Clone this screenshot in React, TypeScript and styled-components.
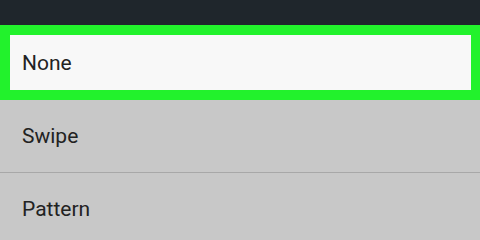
import React from "react";
import styled, { createGlobalStyle } from "styled-components";

const Global = createGlobalStyle`
  html, body { margin: 0; padding: 0; background: #c8c8c8; }
  body { width: 480px; height: 240px; overflow: hidden; font-family: Roboto, "Liberation Sans", sans-serif; }
`;

const Screen = styled.div`
  width: 480px;
  height: 240px;
  display: flex;
  flex-direction: column;
  overflow: hidden;
  background: #c8c8c8;
`;

const Header = styled.div`
  height: 25px;
  flex: none;
  background: #1f262c;
`;

const Highlight = styled.div`
  flex: none;
  background: #22f22c;
  padding: 10px 9px 10px 10px;
`;

const Option = styled.div<{ $selected?: boolean }>`
  display: flex;
  align-items: center;
  padding-left: ${(p) => (p.$selected ? "12px" : "22px")};
  height: ${(p) => (p.$selected ? "55px" : "72px")};
  background: ${(p) => (p.$selected ? "#f8f8f8" : "transparent")};
  font-size: 21px;
  color: #222;
  flex: none;
`;

const Divider = styled.div`
  height: 1px;
  background: #a8a8a8;
  flex: none;
`;

export default function App() {
  return (
    <Screen>
      <Global />
      <Header />
      <Highlight>
        <Option $selected>None</Option>
      </Highlight>
      <Option>Swipe</Option>
      <Divider />
      <Option>Pattern</Option>
    </Screen>
  );
}
